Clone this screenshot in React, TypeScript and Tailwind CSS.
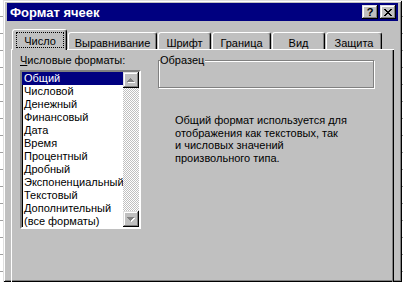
import React from "react";

const raised =
  "shadow-[inset_-1px_-1px_#000000,inset_1px_1px_#dfdfdf,inset_-2px_-2px_#808080,inset_2px_2px_#ffffff]";

function xPath() {
  let d = "";
  for (let i = 0; i < 7; i++) {
    d += `M${i} ${i}h2v1h-2z`;
    d += `M${6 - i} ${i}h2v1h-2z`;
  }
  return d;
}

const arrowUp = "M7 6h1v1h-1z M6 7h3v1h-3z M5 8h5v1h-5z M4 9h7v1h-7z";
const arrowDown = "M4 6h7v1h-7z M5 7h5v1h-5z M6 8h3v1h-3z M7 9h1v1h-1z";

function ScrollBtn({ d }: { d: string }) {
  return (
    <div className={`h-[16px] w-[16px] bg-[#c0c0c0] ${raised}`}>
      <svg width="16" height="16" viewBox="0 0 16 16" className="block">
        <path d={d} fill="#ffffff" transform="translate(1 1)" />
        <path d={d} fill="#808080" />
      </svg>
    </div>
  );
}

function Strip({ w }: { w: string }) {
  const rows = Array.from({ length: 18 });
  return (
    <div className={`${w} flex shrink-0 flex-col bg-white`}>
      {rows.map((_, i) => (
        <div key={i} className="h-[17px] shrink-0 border-b border-[#a0a0a0]" />
      ))}
    </div>
  );
}

export default function App() {
  const items = [
    "Общий",
    "Числовой",
    "Денежный",
    "Финансовый",
    "Дата",
    "Время",
    "Процентный",
    "Дробный",
    "Экспоненциальный",
    "Текстовый",
    "Дополнительный",
    "(все форматы)",
  ];
  const tabs = [
    { label: "Выравнивание", w: "w-[89px]" },
    { label: "Шрифт", w: "w-[53px]" },
    { label: "Граница", w: "w-[59px]" },
    { label: "Вид", w: "w-[53px]" },
    { label: "Защита", w: "w-[56px]" },
  ];
  return (
    <div className="flex h-[282px] w-[403px] overflow-hidden bg-white font-['Liberation_Sans',Arial,sans-serif] text-[11px] leading-[13px] text-black">
      <Strip w="w-[3px]" />
      <div className="flex w-[399px] shrink-0 flex-col bg-[#c0c0c0] px-[4px] pt-[3px] shadow-[inset_1px_1px_#dfdfdf,inset_-1px_-1px_#000000,inset_2px_2px_#ffffff,inset_-2px_-2px_#808080]">
        {/* Title bar */}
        <div className="flex h-[18px] shrink-0 items-center bg-[#000080] pl-[3px] pr-[2px]">
          <span className="flex-1 text-[13px] font-bold leading-[15px] text-white">Формат ячеек</span>
          <div className={`flex h-[14px] w-[16px] items-center justify-center bg-[#c0c0c0] ${raised}`}>
            <span className="text-[11px] font-bold leading-[11px] text-black">?</span>
          </div>
          <div className={`ml-[2px] flex h-[14px] w-[16px] items-center justify-center bg-[#c0c0c0] ${raised}`}>
            <svg width="8" height="7" viewBox="0 0 8 7" className="block">
              <path d={xPath()} fill="#000000" />
            </svg>
          </div>
        </div>

        {/* Body */}
        <div className="flex flex-1 flex-col px-[4px] pt-[8px]">
          {/* Tabs */}
          <div className="relative z-10 flex h-[20px] items-end gap-[1px] pl-[1px]">
            <div className="relative -mb-[1px] flex h-[21px] w-[55px] flex-col rounded-t-[3px] border-l border-t border-r border-white border-r-black bg-[#c0c0c0] pl-[3px] pt-[2px] shadow-[inset_-1px_0_#808080]">
              <div className="flex h-[16px] w-[48px] justify-center border border-dotted border-black pt-[2px]">
                Число
              </div>
            </div>
            {tabs.map((t) => (
              <div
                key={t.label}
                className={`${t.w} flex h-[17px] justify-center rounded-t-[3px] border-l border-t border-r border-white border-r-black bg-[#c0c0c0] pt-[4px] shadow-[inset_-1px_0_#808080]`}
              >
                {t.label}
              </div>
            ))}
          </div>

          {/* Panel */}
          <div className="flex w-[383px] flex-1 border-l border-t border-white pl-[8px] pt-[4px] shadow-[inset_-1px_0_#000000,inset_-2px_0_#808080]">
            {/* Left column */}
            <div className="flex w-[121px] shrink-0 flex-col">
              <div>
                <span className="underline underline-offset-[1px]">Ч</span>исловые форматы:
              </div>
              <div className="mt-[3px] flex h-[159px] border-2 border-l-[#808080] border-t-[#808080] border-r-white border-b-white bg-white">
                <div className="flex flex-1 shadow-[inset_1px_1px_#000000]">
                  <div className="flex w-[101px] flex-col">
                    {items.map((it, i) => (
                      <div
                        key={it}
                        className={`h-[13px] whitespace-nowrap pl-[2px] ${i === 0 ? "bg-[#000080] text-white" : ""}`}
                      >
                        {it}
                      </div>
                    ))}
                  </div>
                  <div className="flex w-[16px] flex-col bg-[repeating-conic-gradient(#c0c0c0_0%_25%,#ffffff_0%_50%)] bg-[length:2px_2px]">
                    <ScrollBtn d={arrowUp} />
                    <div className="flex-1" />
                    <ScrollBtn d={arrowDown} />
                  </div>
                </div>
              </div>
            </div>

            {/* Right column */}
            <div className="ml-[17px] flex flex-col">
              <div className="relative mt-[6px] h-[28px] w-[216px] border border-[#808080] shadow-[inset_1px_1px_#ffffff,1px_1px_#ffffff]">
                <span className="absolute -top-[7px] left-[1px] bg-[#c0c0c0] pr-[1px]">Образец</span>
              </div>
              <div className="ml-[17px] mt-[26px] leading-[12.5px]">
                Общий формат используется для
                <br />
                отображения как текстовых, так
                <br />
                и числовых значений
                <br />
                произвольного типа.
              </div>
            </div>
          </div>
        </div>
      </div>
      <Strip w="w-[1px]" />
    </div>
  );
}
